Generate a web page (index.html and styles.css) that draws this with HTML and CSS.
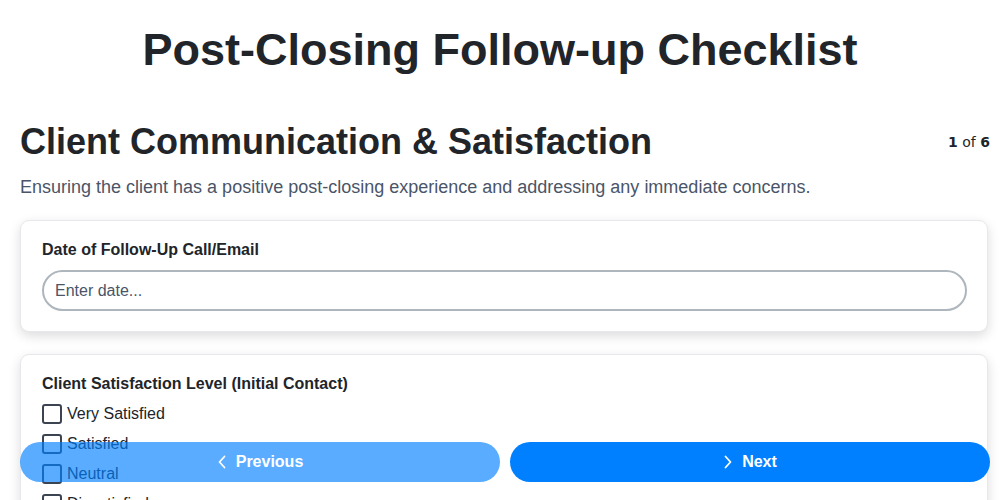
FILE: index.html
```html
<!DOCTYPE html>
<html>
<head>
<meta charset="utf-8">
<link rel="stylesheet" href="styles.css">
</head>
<body>
<div class="page">
  <h1 class="title">Post-Closing Follow-up Checklist</h1>
  <div class="section-head">
    <h2 class="section-title">Client Communication &amp; Satisfaction</h2>
    <div class="counter"><b>1</b> of <b>6</b></div>
  </div>
  <p class="section-desc">Ensuring the client has a positive post-closing experience and addressing any immediate concerns.</p>

  <div class="card">
    <label class="field-label">Date of Follow-Up Call/Email</label>
    <input class="text-input" type="text" placeholder="Enter date...">
  </div>

  <div class="card">
    <div class="field-label">Client Satisfaction Level (Initial Contact)</div>
    <div class="options">
      <label class="option"><span class="box"></span>Very Satisfied</label>
      <label class="option"><span class="box"></span>Satisfied</label>
      <label class="option"><span class="box"></span>Neutral</label>
      <label class="option"><span class="box"></span>Dissatisfied</label>
      <label class="option"><span class="box"></span>Very Dissatisfied</label>
    </div>
  </div>
</div>

<div class="nav">
  <button class="btn btn-prev">
    <svg width="10" height="16" viewBox="0 0 10 16"><path d="M7.5 2.5 L2.5 8 L7.5 13.5" fill="none" stroke="#fff" stroke-width="1.8" stroke-linecap="round" stroke-linejoin="round"/></svg>
    Previous
  </button>
  <button class="btn btn-next">
    <svg width="10" height="16" viewBox="0 0 10 16"><path d="M2.5 2.5 L7.5 8 L2.5 13.5" fill="none" stroke="#fff" stroke-width="1.8" stroke-linecap="round" stroke-linejoin="round"/></svg>
    Next
  </button>
</div>
</body>
</html>
```

FILE: styles.css
```css
html, body {
  margin: 0;
  padding: 0;
  background: #ffffff;
}
body {
  font-family: "Liberation Sans", Arial, sans-serif;
  color: #212529;
}
.page {
  padding: 0 12px 0 20px;
}
.title {
  margin: 0 8px 0 0;
  padding-top: 23px;
  text-align: center;
  font-size: 45px;
  line-height: 54px;
  font-weight: 700;
  color: #212529;
}
.section-head {
  display: flex;
  justify-content: space-between;
  align-items: center;
  margin-top: 45px;
}
.section-title {
  margin: 0;
  font-size: 36px;
  line-height: 40px;
  font-weight: 700;
  color: #212529;
}
.counter {
  font-family: "DejaVu Sans", sans-serif;
  font-size: 14px;
  color: #212529;
  margin-right: -2px;
}
.section-desc {
  margin: 13px 0 21px;
  font-size: 18px;
  line-height: 24px;
  color: #4a5568;
}
.card {
  background: #fff;
  border: 1px solid #e6e8ec;
  border-radius: 9px;
  box-shadow: 0 4px 12px rgba(0, 0, 0, 0.14);
  padding: 19px 20px 20px 21px;
  margin-bottom: 22px;
}
.field-label {
  display: block;
  font-size: 16px;
  font-weight: 700;
  line-height: 20px;
  color: #212529;
  margin-bottom: 10px;
}
.text-input {
  display: block;
  box-sizing: border-box;
  width: 100%;
  height: 41px;
  border: 2px solid #adb5bd;
  border-radius: 21px;
  padding: 0 11px;
  font-family: "Liberation Sans", Arial, sans-serif;
  font-size: 16px;
  color: #212529;
  outline: none;
}
.text-input::placeholder {
  color: #4a5568;
}
.options {
  display: flex;
  flex-direction: column;
  gap: 10px;
}
.option {
  display: flex;
  align-items: center;
  gap: 5px;
  font-size: 16px;
  line-height: 20px;
  color: #212529;
}
.box {
  box-sizing: border-box;
  width: 20px;
  height: 20px;
  border: 2px solid #3d4451;
  border-radius: 3px;
}
.nav {
  position: fixed;
  left: 20px;
  right: 10px;
  bottom: 18px;
  display: flex;
  gap: 10px;
}
.btn {
  flex: 1;
  height: 40px;
  border: none;
  border-radius: 20px;
  color: #fff;
  font-family: "Liberation Sans", Arial, sans-serif;
  font-size: 16px;
  font-weight: 700;
  display: flex;
  align-items: center;
  justify-content: center;
  gap: 9px;
}
.btn-prev {
  background: #0080ff;
  opacity: 0.65;
}
.btn-next {
  background: #0080ff;
}
```
